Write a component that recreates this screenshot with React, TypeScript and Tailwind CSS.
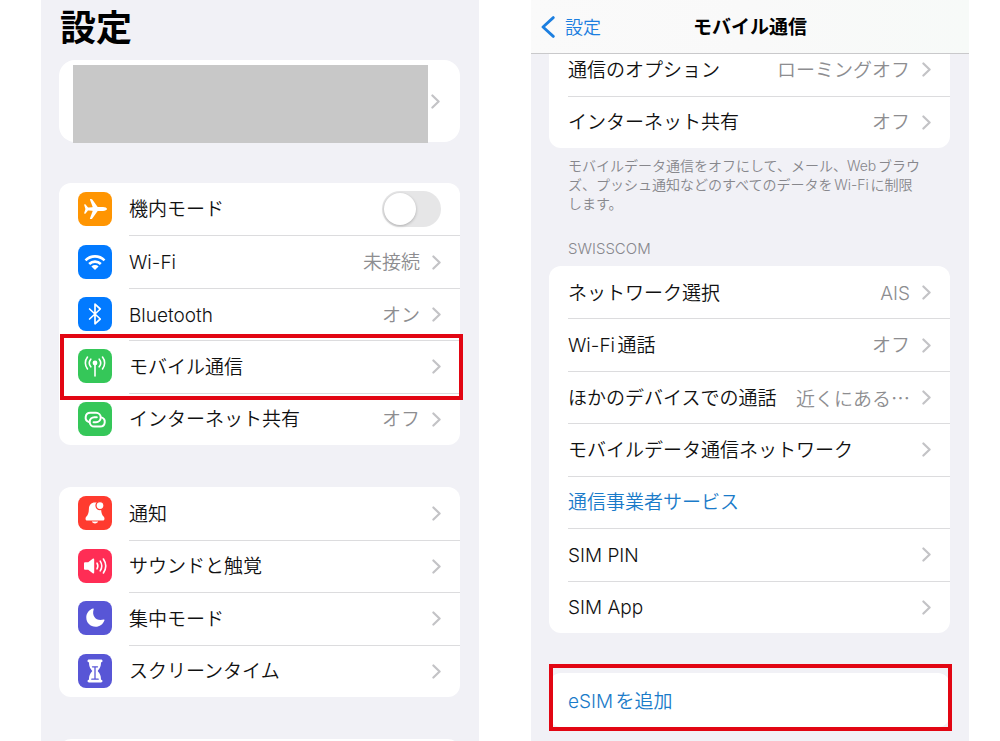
import type { ReactNode } from "react";

const FONT = "font-['Inter','Noto_Sans_CJK_JP',sans-serif]";

function Chevron() {
  return (
    <svg viewBox="0 0 9 15" className="h-[15px] w-[9px] shrink-0" fill="none" aria-hidden="true">
      <path d="M1.4 1.5 7.6 7.5 1.4 13.5" stroke="#c3c3c6" strokeWidth="2.200" strokeLinecap="round" strokeLinejoin="round" />
    </svg>
  );
}

function Tile({ color, children }: { color: string; children: ReactNode }) {
  return (
    <span className={`size-[34px] shrink-0 overflow-hidden rounded-lg ${color}`}>
      <svg viewBox="0 0 34 34" className="size-full" fill="none" stroke="none" aria-hidden="true">
        {children}
      </svg>
    </span>
  );
}

const airplane = (
  <Tile color="bg-[#ff9502]">
    <path
      fill="#fff"
      d="M29 17c0 1.1-1.8 1.9-4 1.9h-4.6c-.5 0-.8.1-1.1.5l-5 7.1c-.3.4-.6.6-1 .6h-.9c-.4 0-.6-.3-.5-.7l2.7-7.1c.1-.3 0-.5-.3-.5l-4-.2c-.3 0-.5.1-.7.3l-2 2.5c-.2.2-.4.3-.6.3h-.4c-.3 0-.5-.3-.4-.6L7.400 17l-1.200-4.100c-.1-.3.1-.6.4-.6H7c.2 0 .4.1.6.3l2 2.500c.2.2.4.3.7.3l4-.2c.3 0 .4-.2.300-.5L11.900 7.600c-.1-.4.1-.7.5-.7h.9c.4 0 .7.200 1 .6l5 7.100c.3.4.6.5 1.100.5H25c2.200 0 4 .8 4 1.900Z"
    />
  </Tile>
);

const wifi = (
  <Tile color="bg-[#027aff]">
    <g stroke="#fff" strokeWidth="2.6">
      <path d="M7.500 15.300a13.400 13.400 0 0 1 19 0" />
      <path d="M11.200 19a8.200 8.200 0 0 1 11.600 0" />
    </g>
    <path fill="#fff" d="m17 25-3.600-3.600a5.100 5.100 0 0 1 7.200 0L17 25Z" />
  </Tile>
);

const bluetooth = (
  <Tile color="bg-[#027aff]">
    <path d="M11.600 12 22.300 22 17 26.800V7.200L22.300 12 11.600 22" stroke="#fff" strokeWidth="1.700" strokeLinejoin="round" strokeLinecap="round" />
  </Tile>
);

const antenna = (
  <Tile color="bg-[#35c759]">
    <circle cx="17" cy="14" r="2.400" fill="#fff" />
    <g stroke="#fff" strokeWidth="1.600" strokeLinecap="round">
      <path d="M17 15v12" />
      <path d="M12.800 10.200a6 6 0 0 0 0 7.600M21.200 10.200a6 6 0 0 1 0 7.600" />
      <path d="M9.500 8a9.500 9.500 0 0 0 0 12M24.500 8a9.500 9.500 0 0 1 0 12" />
    </g>
  </Tile>
);

const link = (
  <Tile color="bg-[#35c759]">
    <g stroke="#fff" strokeWidth="2" strokeLinecap="round">
      <path d="M11 20A4.700 4.700 0 0 1 12.300 10.800H18A4.700 4.700 0 0 1 18 20.200H15.600" />
      <path d="M23.400 15.400A4.700 4.700 0 0 1 22.100 24.600H16.400A4.700 4.700 0 0 1 16.400 15.200H18.800" />
    </g>
  </Tile>
);

const bell = (
  <Tile color="bg-[#ff3b2f]">
    <path
      fill="#fff"
      d="M17 6.600c-3.900 0-5.900 2.700-6.100 6.400-.2 4.100-.8 5.700-2.500 7.500C6.800 22.300 7.500 24.500 9.200 24.500h15.600c1.700 0 2.400-2.200.8-4-1.700-1.800-2.300-3.400-2.500-7.500-.2-3.700-2.200-6.400-6.100-6.400ZM13.800 25.600h6.400c-.4 1.100-1.600 1.800-3.200 1.800s-2.800-.7-3.200-1.800Z"
    />
    <circle cx="22" cy="9.600" r="4" fill="#fff" stroke="#ff3b2f" strokeWidth="1.300" />
  </Tile>
);

const speaker = (
  <Tile color="bg-[#ff2d55]">
    <path fill="#fff" d="M6 14.600c0-.8.5-1.300 1.300-1.300h2.900L14.700 9.700c.7-.5 1.500-.2 1.500.7v13.200c0 .9-.8 1.200-1.500.7l-4.500-3.600H7.300c-.8 0-1.300-.5-1.300-1.300v-4.800Z" />
    <g stroke="#fff" strokeWidth="1.600" strokeLinecap="round">
      <path d="M19 14.200a5.500 5.500 0 0 1 0 5.600" />
      <path d="M22.200 12.100a9 9 0 0 1 0 9.800" />
      <path d="M25.400 10a12.500 12.500 0 0 1 0 14" />
    </g>
  </Tile>
);

const moon = (
  <Tile color="bg-[#5856d6]">
    <path fill="#fff" d="M14.900 7.500c.5-.2 1 .2.800.8-2.300 6.900 2.700 12.400 9.900 10.300.6-.2 1 .3.800.8-1.400 3.800-4.700 6.300-8.800 6.300-5.300 0-9.300-4-9.300-9.200 0-4.200 2.600-7.600 6.600-9Z" />
  </Tile>
);

const hourglass = (
  <Tile color="bg-[#5856d6]">
    <path
      fill="#fff"
      d="M11 5.500h12c.9 0 1.500.6 1.500 1.400S23.900 8.300 23 8.300c0 4.500-1.200 6-3.300 8.700 2.100 2.700 3.300 4.200 3.300 8.700.9 0 1.500.6 1.500 1.400s-.6 1.400-1.500 1.400H11c-.9 0-1.500-.6-1.500-1.400s.6-1.400 1.500-1.400c0-4.500 1.200-6 3.300-8.700C12.200 14.300 11 12.800 11 8.300c-.9 0-1.500-.6-1.500-1.400S10.100 5.500 11 5.500Z"
    />
    <path d="M14.500 12.800h5M17 13v11.500M13.800 25.200h6.400" stroke="#5856d6" strokeWidth="1.300" strokeLinecap="round" />
  </Tile>
);

function Highlight({ place }: { place: string }) {
  return <span aria-hidden="true" className={`pointer-events-none absolute z-10 border-4 border-[#e20613] ${place}`} />;
}

type RowProps = {
  label: string;
  icon?: ReactNode;
  value?: ReactNode;
  action?: boolean;
  marked?: string;
};

function Row({ label, icon, value, action, marked }: RowProps) {
  return (
    <li className="group relative flex flex-1">
      <a href="#" className="flex flex-1 items-center gap-[17px] pl-[19px]">
        {icon}
        <span className="flex flex-1 items-center gap-3 self-stretch border-t border-[#dcdcde] pr-[19px] group-first:border-transparent">
          <span className={`flex-1 pt-0.5 whitespace-nowrap ${action ? "text-[#1a7bc9]" : "text-[#111]"}`}>{label}</span>
          {value && <span className="pt-0.5 whitespace-nowrap text-[#8d8d90]">{value}</span>}
          {!action && <Chevron />}
        </span>
      </a>
      {marked && <Highlight place={marked} />}
    </li>
  );
}

function ToggleRow({ label, icon }: { label: string; icon: ReactNode }) {
  return (
    <li className="flex flex-1">
      <label className="flex flex-1 items-center gap-[17px] pl-[19px]">
        {icon}
        <span className="flex-1 pt-0.5 text-[#111]">{label}</span>
        <span className="relative mr-[19px] flex">
          <input
            type="checkbox"
            role="switch"
            className="peer h-9 w-[59px] appearance-none rounded-full bg-[#e6e6e7] checked:bg-[#35c759]"
          />
          <span className="pointer-events-none absolute top-[2px] left-[2px] size-8 rounded-full bg-white shadow-[0_1px_3px_rgba(0,0,0,0.25)] peer-checked:left-[25px]" />
        </span>
      </label>
    </li>
  );
}

function Group({ size, children }: { size: string; children: ReactNode }) {
  return <ul className={`flex flex-col rounded-xl bg-white ${size}`}>{children}</ul>;
}

function SettingsScreen() {
  return (
    <section className="flex flex-col bg-[#f1f1f6] pr-[19px] pl-[18px]">
      <h1 className="h-[60px] pl-px text-4xl leading-[56px] font-bold text-black">設定</h1>
      <a href="#" aria-label="アカウント" className="flex h-[82px] shrink-0 items-start gap-[3px] rounded-2xl bg-white pt-[5px] pr-5 pl-[14px]">
        <span className="h-[78px] flex-1 bg-[#c8c8c8]" />
        <span className="flex h-[72px] items-center">
          <Chevron />
        </span>
      </a>
      <div className="mt-[41px] flex flex-col gap-[42px]">
        <Group size="min-h-[262px]">
          <ToggleRow label="機内モード" icon={airplane} />
          <Row label="Wi-Fi" icon={wifi} value="未接続" />
          <Row label="Bluetooth" icon={bluetooth} value="オン" />
          <Row label="モバイル通信" icon={antenna} marked="-top-[6px] -bottom-[7px] left-px -right-[3px]" />
          <Row label="インターネット共有" icon={link} value="オフ" />
        </Group>
        <Group size="min-h-[210px]">
          <Row label="通知" icon={bell} />
          <Row label="サウンドと触覚" icon={speaker} />
          <Row label="集中モード" icon={moon} />
          <Row label="スクリーンタイム" icon={hourglass} />
        </Group>
        <div className="h-[52px] rounded-xl bg-white" />
      </div>
    </section>
  );
}

function MobileScreen() {
  return (
    <section className="flex flex-col bg-[#f1f1f6]">
      <header className="relative z-10 grid h-[54px] shrink-0 grid-cols-[1fr_auto_1fr] items-center border-b border-[#c9c9cb] bg-linear-to-r from-[#fafafa] via-[#f9f9f9] to-[#f7faf8]">
        <a href="#" className="flex items-center gap-[10px] pl-[10px] text-[#1c7fe0]">
          <svg viewBox="0 0 14 22" className="h-[22px] w-[14px]" fill="none" aria-hidden="true">
            <path d="M12.300 1.600 2 11l10.300 9.400" stroke="#1c7fe0" strokeWidth="2.800" strokeLinecap="round" strokeLinejoin="round" />
          </svg>
          <span className="pt-0.5 text-lg leading-6">設定</span>
        </a>
        <h2 className="pt-0.5 font-bold text-black">モバイル通信</h2>
      </header>
      <div className="-mt-[11px] flex flex-col pr-[19px] pl-[18px]">
        <Group size="min-h-[105px]">
          <Row label="通信のオプション" value="ローミングオフ" />
          <Row label="インターネット共有" value="オフ" />
        </Group>
        <p className="mt-2 pr-[25px] pl-[19px] text-sm leading-[19px] text-[#87878c]">
          モバイルデータ通信をオフにして、メール、Webブラウズ、プッシュ通知などのすべてのデータをWi-Fiに制限します。
        </p>
        <h3 className="mt-[26px] mb-[7px] pl-[19px] text-[15px] leading-5 text-[#87878c]">SWISSCOM</h3>
        <Group size="min-h-[367px]">
          <Row label="ネットワーク選択" value="AIS" />
          <Row label="Wi-Fi通話" value="オフ" />
          <Row label="ほかのデバイスでの通話" value={<span className="font-['Noto_Sans_CJK_JP',sans-serif]">近くにある…</span>} />
          <Row label="モバイルデータ通信ネットワーク" />
          <Row label="通信事業者サービス" action />
          <Row label="SIM PIN" />
          <Row label="SIM App" />
        </Group>
        <div className="mt-10 flex flex-col">
          <Group size="min-h-[54px]">
            <Row label="eSIMを追加" action marked="-top-[9px] -bottom-[4px] left-0 -right-[2px]" />
          </Group>
        </div>
      </div>
    </section>
  );
}

export default function App() {
  return (
    <main
      lang="ja"
      className={`grid h-screen grid-cols-2 gap-[52px] overflow-hidden bg-white pr-[31px] pl-[41px] text-[19px] leading-6 font-[350] [text-autospace:normal] ${FONT}`}
    >
      <SettingsScreen />
      <MobileScreen />
    </main>
  );
}
